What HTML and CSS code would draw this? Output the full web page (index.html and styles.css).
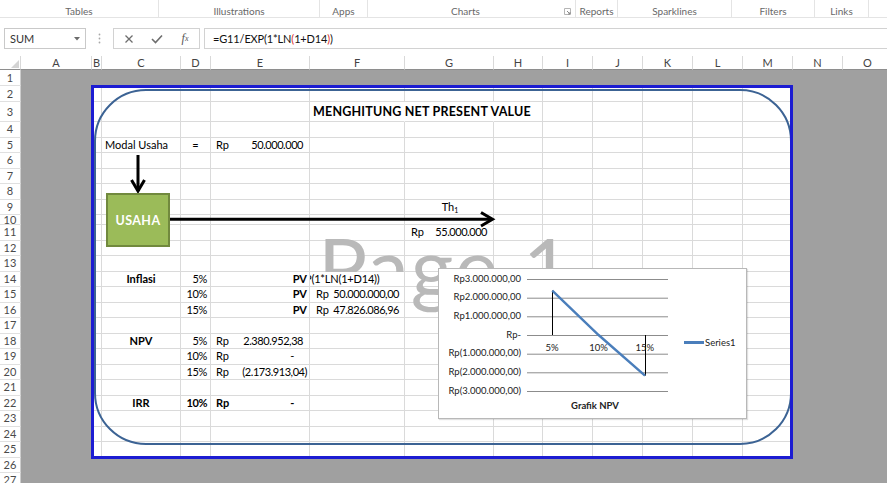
FILE: index.html
```html
<!DOCTYPE html>
<html lang="id">
<head>
<meta charset="utf-8">
<title>NPV</title>
<link rel="stylesheet" href="styles.css">
</head>
<body>
<div class="ribbon">
  <div class="grp g-tables">Tables</div>
  <div class="grp g-illus">Illustrations</div>
  <div class="grp g-apps">Apps</div>
  <div class="grp g-charts">Charts<svg class="launch" width="7" height="7" viewBox="0 0 7 7"><path d="M0.5 0.5H6.5V6.5H0.5Z" fill="none" stroke="#b5b5b5"/><path d="M3 3L6 6M4 6H6V4" fill="none" stroke="#8a8a8a"/></svg></div>
  <div class="grp g-reports">Reports</div>
  <div class="grp g-spark">Sparklines</div>
  <div class="grp g-filters">Filters</div>
  <div class="grp g-links">Links</div>
  <div class="grp g-rest"></div>
</div>

<div class="fbar">
  <div class="namebox"><span>SUM</span><svg width="6" height="4" viewBox="0 0 6 4"><path d="M0 0H6L3 3.5Z" fill="#6b6b6b"/></svg></div>
  <div class="grip"><svg width="3" height="11" viewBox="0 0 3 11"><circle cx="1.5" cy="1.5" r="0.9" fill="#a8a8a8"/><circle cx="1.5" cy="5.5" r="0.9" fill="#a8a8a8"/><circle cx="1.5" cy="9.5" r="0.9" fill="#a8a8a8"/></svg></div>
  <div class="fnbox">
    <span class="slot"><svg width="10" height="10" viewBox="0 0 10 10"><path d="M1.5 1.5L8.5 8.5M8.5 1.5L1.5 8.5" stroke="#6e6e6e" stroke-width="1.3" fill="none"/></svg></span>
    <span class="slot"><svg width="12" height="10" viewBox="0 0 12 10"><path d="M1 5L4.5 8.5L11 1.5" stroke="#6e6e6e" stroke-width="1.6" fill="none"/></svg></span>
    <span class="slot fx"><i>f</i><sub>x</sub></span>
  </div>
  <div class="formula">=G11/EXP(1*LN<span class="red">(</span>1+D14<span class="red">)</span>)</div>
</div>

<div class="sheet">
  <table class="grid">
    <thead>
      <tr class="hd">
        <th class="h-rh"><svg class="corner" width="8" height="8" viewBox="0 0 8 8"><path d="M8 0V8H0Z" fill="#d4d4d4"/></svg></th>
        <th class="h-a">A</th><th class="h-b">B</th><th class="h-c">C</th><th class="h-d">D</th><th class="h-e">E</th><th class="h-f">F</th><th class="h-g">G</th><th class="h-h">H</th><th>I</th><th>J</th><th>K</th><th>L</th><th>M</th><th>N</th><th>O</th>
      </tr>
    </thead>
    <tbody>
      <tr class="out r16"><th>1</th><td></td><td></td><td></td><td></td><td></td><td></td><td></td><td></td><td></td><td></td><td></td><td></td><td></td><td></td><td></td></tr>
      <tr class="r16"><th>2</th><td></td><td></td><td></td><td></td><td></td><td></td><td></td><td></td><td></td><td></td><td></td><td></td><td></td><td></td><td></td></tr>
      <tr class="r3"><th>3</th><td></td><td></td><td></td><td></td><td></td><td class="ttl m">MENGHITUNG NET PRESENT VALUE</td><td class="m"></td><td></td><td></td><td></td><td></td><td></td><td></td><td></td><td></td></tr>
      <tr><th>4</th><td></td><td></td><td></td><td></td><td></td><td></td><td></td><td></td><td></td><td></td><td></td><td></td><td></td><td></td><td></td></tr>
      <tr><th>5</th><td></td><td></td><td>Modal Usaha</td><td class="c">=</td><td class="acc"><div class="ac"><span>Rp</span><span>50.000.000</span></div></td><td></td><td></td><td></td><td></td><td></td><td></td><td></td><td></td><td></td><td></td></tr>
      <tr><th>6</th><td></td><td></td><td></td><td></td><td></td><td></td><td></td><td></td><td></td><td></td><td></td><td></td><td></td><td></td><td></td></tr>
      <tr><th>7</th><td></td><td></td><td></td><td></td><td></td><td></td><td></td><td></td><td></td><td></td><td></td><td></td><td></td><td></td><td></td></tr>
      <tr><th>8</th><td></td><td></td><td></td><td></td><td></td><td></td><td></td><td></td><td></td><td></td><td></td><td></td><td></td><td></td><td></td></tr>
      <tr><th>9</th><td></td><td></td><td></td><td></td><td></td><td></td><td class="c th1">Th<sub>1</sub></td><td></td><td></td><td></td><td></td><td></td><td></td><td></td><td></td></tr>
      <tr class="r10"><th>10</th><td></td><td></td><td></td><td></td><td></td><td></td><td></td><td></td><td></td><td></td><td></td><td></td><td></td><td></td><td></td></tr>
      <tr><th>11</th><td></td><td></td><td></td><td></td><td></td><td></td><td class="acc acc-g"><div class="ac"><span>Rp</span><span>55.000.000</span></div></td><td></td><td></td><td></td><td></td><td></td><td></td><td></td><td></td></tr>
      <tr><th>12</th><td></td><td></td><td></td><td></td><td></td><td></td><td></td><td></td><td></td><td></td><td></td><td></td><td></td><td></td><td></td></tr>
      <tr><th>13</th><td></td><td></td><td></td><td></td><td></td><td></td><td></td><td></td><td></td><td></td><td></td><td></td><td></td><td></td><td></td></tr>
      <tr><th>14</th><td></td><td></td><td class="c b">Inflasi</td><td class="r">5%</td><td class="r b pv">PV</td><td class="solid edit"><div class="clip"><span>P(1*LN(1+D14))</span></div></td><td></td><td></td><td></td><td></td><td></td><td></td><td></td><td></td><td></td></tr>
      <tr><th>15</th><td></td><td></td><td></td><td class="r">10%</td><td class="r b pv">PV</td><td class="solid acc acc-f"><div class="ac"><span>Rp</span><span>50.000.000,00</span></div></td><td></td><td></td><td></td><td></td><td></td><td></td><td></td><td></td><td></td></tr>
      <tr><th>16</th><td></td><td></td><td></td><td class="r">15%</td><td class="r b pv">PV</td><td class="solid acc acc-f"><div class="ac"><span>Rp</span><span>47.826.086,96</span></div></td><td></td><td></td><td></td><td></td><td></td><td></td><td></td><td></td><td></td></tr>
      <tr><th>17</th><td></td><td></td><td></td><td></td><td></td><td></td><td></td><td></td><td></td><td></td><td></td><td></td><td></td><td></td><td></td></tr>
      <tr><th>18</th><td></td><td></td><td class="c b">NPV</td><td class="r">5%</td><td class="acc"><div class="ac"><span>Rp</span><span>2.380.952,38</span></div></td><td></td><td></td><td></td><td></td><td></td><td></td><td></td><td></td><td></td><td></td></tr>
      <tr><th>19</th><td></td><td></td><td></td><td class="r">10%</td><td class="acc zero"><div class="ac"><span>Rp</span><span>-</span></div></td><td></td><td></td><td></td><td></td><td></td><td></td><td></td><td></td><td></td><td></td></tr>
      <tr><th>20</th><td></td><td></td><td></td><td class="r">15%</td><td class="acc neg"><div class="ac"><span>Rp</span><span>(2.173.913,04)</span></div></td><td></td><td></td><td></td><td></td><td></td><td></td><td></td><td></td><td></td><td></td></tr>
      <tr><th>21</th><td></td><td></td><td></td><td></td><td></td><td></td><td></td><td></td><td></td><td></td><td></td><td></td><td></td><td></td><td></td></tr>
      <tr><th>22</th><td></td><td></td><td class="c b">IRR</td><td class="r b">10%</td><td class="acc zero b"><div class="ac"><span>Rp</span><span>-</span></div></td><td></td><td></td><td></td><td></td><td></td><td></td><td></td><td></td><td></td><td></td></tr>
      <tr><th>23</th><td></td><td></td><td></td><td></td><td></td><td></td><td></td><td></td><td></td><td></td><td></td><td></td><td></td><td></td><td></td></tr>
      <tr><th>24</th><td></td><td></td><td></td><td></td><td></td><td></td><td></td><td></td><td></td><td></td><td></td><td></td><td></td><td></td><td></td></tr>
      <tr><th>25</th><td></td><td></td><td></td><td></td><td></td><td></td><td></td><td></td><td></td><td></td><td></td><td></td><td></td><td></td><td></td></tr>
      <tr class="out"><th>26</th><td></td><td></td><td></td><td></td><td></td><td></td><td></td><td></td><td></td><td></td><td></td><td></td><td></td><td></td><td></td></tr>
      <tr class="out"><th>27</th><td></td><td></td><td></td><td></td><td></td><td></td><td></td><td></td><td></td><td></td><td></td><td></td><td></td><td></td><td></td></tr>
    </tbody>
  </table>

  <div class="wm">Page 1</div>
  <div class="frame"></div>
  <svg class="arrows" width="887" height="427" viewBox="0 0 887 427">
    <path d="M138 99V135" />
    <path d="M131.5 124L138 135L144.5 124" />
    <path d="M170 163.3H491" />
    <path d="M481 156.5L492.5 163.3L481 170" />
  </svg>
  <div class="usaha">USAHA</div>

  <div class="chart">
    <div class="ylabels">
      <span>Rp3.000.000,00</span>
      <span>Rp2.000.000,00</span>
      <span>Rp1.000.000,00</span>
      <span>Rp-</span>
      <span>Rp(1.000.000,00)</span>
      <span>Rp(2.000.000,00)</span>
      <span>Rp(3.000.000,00)</span>
    </div>
    <div class="plot">
      <svg width="150" height="130" viewBox="0 0 150 130">
        <g stroke="#8c8c8c" stroke-width="1">
          <path d="M5 10.5H146M5 29.2H146M5 47.8H146M5 66.5H146M5 85.2H146M5 103.8H146M5 122.5H146"/>
        </g>
        <path d="M30.5 21.6V66M123.5 66V106.6" stroke="#000" stroke-width="1" fill="none"/>
        <polyline points="30.3,21.6 76.6,66 123,106.6" fill="none" stroke="#4a7ebb" stroke-width="2.4"/>
      </svg>
      <div class="cats"><span>5%</span><span>10%</span><span>15%</span></div>
    </div>
    <div class="legend"><i class="lg-line"></i><span>Series1</span></div>
    <div class="ctitle">Grafik NPV</div>
  </div>

  <div class="print"></div>
</div>
</body>
</html>
```

FILE: styles.css
```css
* { box-sizing: border-box; }
html, body { margin: 0; padding: 0; }
body {
  width: 887px;
  height: 483px;
  overflow: hidden;
  background: #fff;
  font-family: Lato, "Liberation Sans", sans-serif;
  color: #000;
}

/* Ribbon group labels */
.ribbon {
  display: flex;
  height: 18px;
  border-bottom: 1px solid #e4e4e4;
}
.grp {
  height: 17px;
  border-right: 1px solid #e4e4e4;
  display: flex;
  align-items: flex-end;
  justify-content: center;
  padding-bottom: 0;
  font-size: 10px;
  line-height: 12px;
  color: #686868;
  position: relative;
}
.g-tables { width: 159px; }
.g-illus { width: 161px; }
.g-apps { width: 48px; }
.g-charts { width: 208px; padding-right: 12px; }
.g-reports { width: 42px; }
.g-spark { width: 114px; }
.g-filters { width: 83px; }
.g-links { width: 54px; }
.g-rest { flex: 1; border-right: none; }
.launch { position: absolute; right: 4px; bottom: 2px; }

/* Formula bar */
.fbar {
  display: flex;
  height: 21px;
  margin-top: 10px;
  padding-left: 4px;
}
.namebox {
  width: 82px;
  border: 1px solid #c9c9c9;
  display: flex;
  align-items: center;
  justify-content: space-between;
  padding: 0 5px 0 5px;
  font-size: 11px;
  color: #333;
}
.grip {
  width: 27px;
  display: flex;
  align-items: center;
  justify-content: center;
}
.fnbox {
  width: 87px;
  border: 1px solid #d2d2d2;
  display: flex;
  align-items: center;
  padding-left: 1px;
}
.slot {
  width: 28px;
  display: flex;
  justify-content: center;
  align-items: center;
}
.fx {
  font-family: "Liberation Serif", serif;
  color: #555;
  font-size: 12px;
}
.fx sub { font-size: 8px; font-style: italic; vertical-align: -1px; }
.formula {
  flex: 1;
  margin-left: 4px;
  border: 1px solid #d2d2d2;
  border-right: none;
  padding-left: 8px;
  display: flex;
  align-items: center;
  font-size: 11px;
  letter-spacing: -0.15px;
  color: #111;
}
.red { color: #e0302c; }

/* Sheet */
.sheet {
  position: relative;
  margin-top: 7px;
  width: 887px;
  height: 427px;
  overflow: hidden;
}
.grid {
  border-collapse: separate;
  border-spacing: 0;
  table-layout: fixed;
  width: 893px;
}
.hd th {
  width: 50px;
  height: 14px;
  padding: 0;
  font-weight: normal;
  font-size: 11px;
  line-height: 12px;
  color: #444;
  background: #fff;
  border-right: 1px solid #d9d9d9;
  border-bottom: 1px solid #8e8e8e;
  text-align: center;
  position: relative;
}
.hd .h-rh { width: 21px; }
.hd .h-a { width: 71px; }
.hd .h-b { width: 10px; }
.hd .h-c { width: 79px; }
.hd .h-d { width: 30px; }
.hd .h-e { width: 99px; }
.hd .h-f { width: 95px; }
.hd .h-g { width: 89px; }
.hd .h-h { width: 49px; }
.corner { position: absolute; right: 1px; bottom: 1px; }

tbody tr { height: 15.5px; }
tbody tr.r16 { height: 16px; }
tbody tr.r3 { height: 20px; }
tbody tr.r10 { height: 10px; }
tbody th {
  padding: 0;
  font-weight: normal;
  font-size: 11px;
  line-height: 12px;
  color: #4a4a4a;
  background: #fff;
  text-align: center;
  border-right: 1px solid #cdcdcd;
  border-bottom: 1px solid #e0e0e0;
  overflow: hidden;
}
tbody td {
  padding: 0 3px;
  font-size: 11px;
  line-height: 12px;
  white-space: nowrap;
  background: #fff;
  border-right: 1px solid #dadada;
  border-bottom: 1px solid #dadada;
  vertical-align: middle;
}
tbody tr.r10 th, tbody tr.r10 td { line-height: 9px; }
tbody td:nth-child(2),
tbody td:nth-child(n+15),
tbody tr.out td {
  background: #a0a0a0;
  border-color: #a0a0a0;
}
.c { text-align: center; }
.r { text-align: right; letter-spacing: -0.4px; }
.b { font-weight: bold; }
.pv { padding-right: 2px; letter-spacing: 0; }
.m { border-right-color: #fff; }
.ttl {
  font-weight: bold;
  font-size: 12.5px;
  letter-spacing: 0.2px;
  overflow: visible;
}
.th1 { padding-left: 5px; }
td sub { font-size: 7px; vertical-align: -2px; line-height: 0; }
.acc { padding: 0 6px 0 5px; }
.acc-g { padding: 0 6px 0 6px; }
.acc-f { padding: 0 5px 0 6px; }
.neg { padding-right: 2px; }
.zero { padding-right: 15px; }
.ac { display: flex; justify-content: space-between; }
.ac span:last-child { letter-spacing: -0.45px; }
.solid { position: relative; z-index: 1; background: #fff; }
.edit { padding: 0; }
.clip { overflow: hidden; letter-spacing: -0.2px; }
.clip span { margin-left: -5px; }

/* Watermark */
.wm {
  position: absolute;
  left: 318px;
  top: 168px;
  font-size: 82px;
  line-height: 1;
  letter-spacing: 2px;
  color: #b9b9b9;
  white-space: nowrap;
}

/* Shapes */
.frame {
  position: absolute;
  left: 94px;
  top: 33px;
  width: 698px;
  height: 356px;
  border: 2.5px solid #3c6394;
  border-radius: 52px;
  z-index: 2;
}
.arrows {
  position: absolute;
  left: 0;
  top: 0;
  z-index: 2;
  fill: none;
  stroke: #000;
  stroke-width: 3;
}
.usaha {
  position: absolute;
  left: 106px;
  top: 137px;
  width: 64px;
  height: 54px;
  background: #9bbb59;
  border: 2px solid #71893e;
  color: #fff;
  font-weight: bold;
  font-size: 12.5px;
  letter-spacing: 0.4px;
  display: flex;
  align-items: center;
  justify-content: center;
  z-index: 3;
}

/* Chart */
.chart {
  position: absolute;
  left: 438px;
  top: 212px;
  width: 309px;
  height: 151px;
  background: #fff;
  border: 1px solid #b8b8b8;
  box-shadow: 1px 1px 1px rgba(0, 0, 0, 0.12);
  display: grid;
  grid-template-columns: 83px 150px 1fr;
  grid-template-rows: 130px 1fr;
  font-size: 9.5px;
  color: #222;
  z-index: 3;
}
.ylabels {
  display: flex;
  flex-direction: column;
  align-items: flex-end;
  padding-top: 0.7px;
  padding-right: 1px;
}
.ylabels span { height: 18.67px; line-height: 18.67px; white-space: nowrap; }
.plot { position: relative; }
.plot svg { display: block; }
.cats {
  position: absolute;
  left: 7px;
  top: 73px;
  display: flex;
}
.cats span { width: 46.3px; text-align: center; line-height: 12px; }
.legend {
  grid-column: 3;
  grid-row: 1;
  align-self: start;
  margin-top: 67.5px;
  padding-left: 12px;
  display: flex;
  align-items: center;
  line-height: 12px;
}
.lg-line { display: block; width: 20px; height: 2.5px; background: #4a7ebb; margin-right: 1px; }
.ctitle {
  grid-column: 2;
  grid-row: 2;
  text-align: center;
  font-weight: bold;
  line-height: 14px;
  padding-right: 4px;
}

.print {
  position: absolute;
  left: 91px;
  top: 29px;
  width: 702px;
  height: 374px;
  border: 3px solid #1c1cd2;
  z-index: 4;
}
```
